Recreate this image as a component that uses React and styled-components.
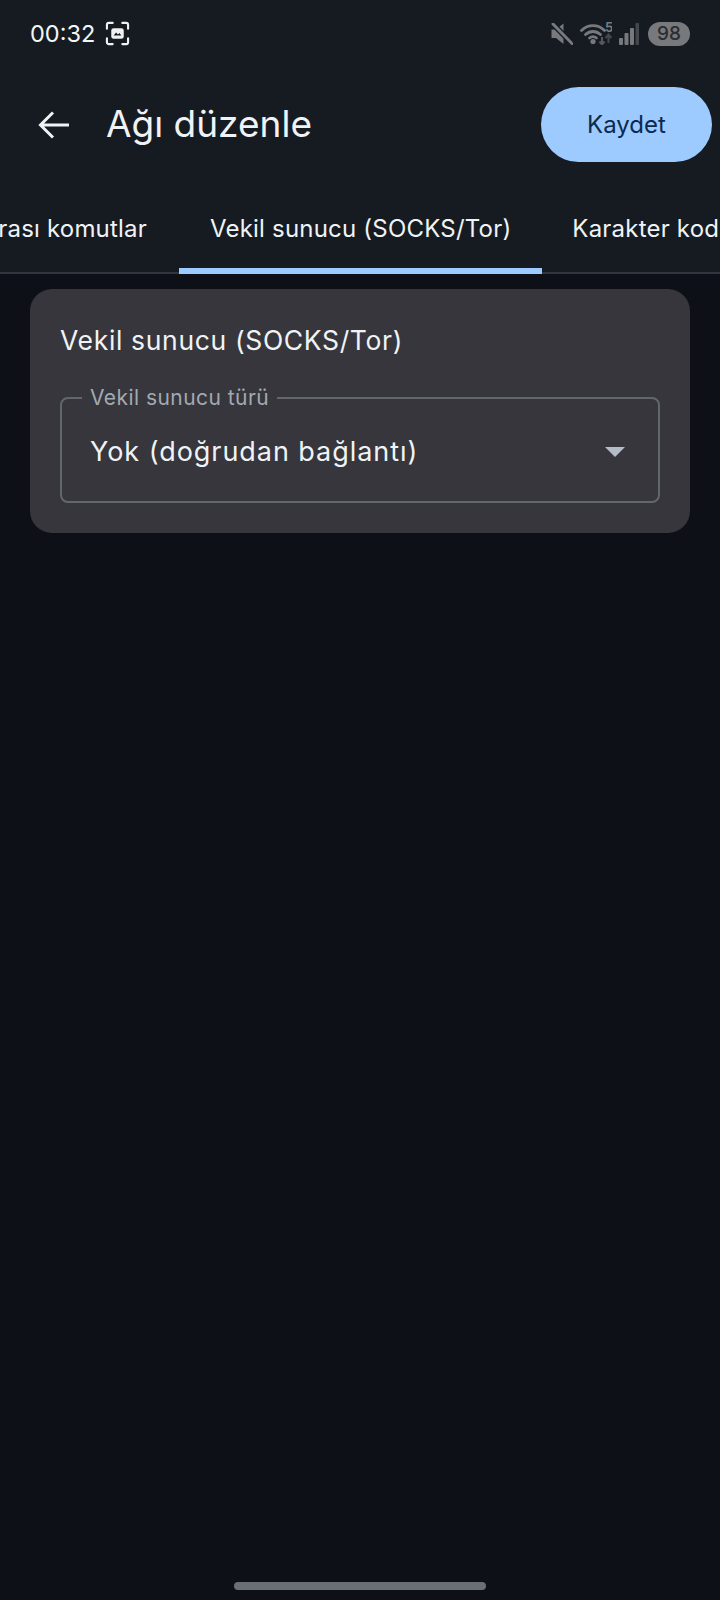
import styled, { createGlobalStyle } from "styled-components";

const GlobalStyle = createGlobalStyle`
  html, body {
    margin: 0;
    padding: 0;
    background: #0d1117;
  }
  * {
    box-sizing: border-box;
  }
`;

const Screen = styled.div`
  width: 720px;
  height: 1600px;
  display: flex;
  flex-direction: column;
  overflow: hidden;
  background: #0d1117;
  font-family: Inter, "Liberation Sans", sans-serif;
  color: #f0f3f6;
`;

const Top = styled.header`
  background: #161b22;
`;

const StatusBar = styled.div`
  height: 64px;
  padding: 3px 30px 0;
  display: flex;
  align-items: center;
  justify-content: space-between;
`;

const StatusLeft = styled.div`
  display: flex;
  align-items: center;
  gap: 10px;
`;

const Clock = styled.span`
  font-size: 23.5px;
  color: #f4f5f6;
`;

const StatusRight = styled.div`
  display: flex;
  align-items: center;
  gap: 7px;
`;

const Battery = styled.span`
  width: 42px;
  height: 24px;
  margin-left: 2px;
  border-radius: 12px;
  background: #77797c;
  color: #2a2d32;
  font-size: 19px;
  font-weight: 500;
  display: flex;
  align-items: center;
  justify-content: center;
`;

const AppBar = styled.div`
  height: 124px;
  padding: 0 8px 3px 38px;
  display: flex;
  align-items: center;
`;

const BackIcon = styled.svg`
  width: 32px;
  height: 30px;
  margin-right: 36px;
`;

const Title = styled.h1`
  flex: 1;
  margin: 0 0 2px;
  font-size: 37px;
  font-weight: 400;
`;

const SaveButton = styled.button`
  width: 171px;
  height: 75px;
  border: 0;
  border-radius: 38px;
  background: #9ecbff;
  color: #0a2a52;
  font-family: inherit;
  font-size: 24px;
`;

const TabStrip = styled.nav`
  height: 86px;
  display: flex;
  border-bottom: 2px solid #30363d;
`;

const Tab = styled.div`
  flex: none;
  height: 86px;
  padding: 0 ${(p) => p.$pad}px;
  display: flex;
  align-items: center;
  white-space: nowrap;
  font-size: 24px;
  letter-spacing: 0.2px;
  color: #f0f3f6;
  border-bottom: 6px solid ${(p) => (p.$active ? "#9ecbff" : "transparent")};
`;

const ClippedTab = styled(Tab)`
  width: 179px;
  justify-content: flex-end;
  overflow: hidden;
`;

const Body = styled.main`
  flex: 1;
  padding: 15px 30px 0;
  display: flex;
  flex-direction: column;
`;

const Card = styled.section`
  height: 244px;
  padding: 30px;
  border-radius: 22px;
  background: #36363c;
`;

const CardTitle = styled.h2`
  margin: 0;
  height: 68px;
  font-size: 26.5px;
  line-height: 42px;
  font-weight: 400;
  letter-spacing: 0.65px;
`;

const Field = styled.fieldset`
  margin: 0;
  height: 116px;
  padding: 0 33px 0 20px;
  display: flex;
  align-items: center;
  justify-content: space-between;
  border: 2px solid #62666f;
  border-radius: 8px;
  min-width: 0;
`;

const FieldLabel = styled.legend`
  padding: 0 8px;
  font-size: 21px;
  line-height: 22px;
  color: #a3a9b2;
  letter-spacing: 0.45px;
`;

const FieldValue = styled.span`
  margin: 0 0 8px 8px;
  font-size: 27px;
  letter-spacing: 0.95px;
`;

const Caret = styled.span`
  width: 0;
  height: 0;
  margin-bottom: 7px;
  border-left: 10px solid transparent;
  border-right: 10px solid transparent;
  border-top: 10px solid #b4bcc8;
`;

const HomeArea = styled.div`
  height: 28px;
  padding-top: 10px;
  display: flex;
  justify-content: center;
`;

const HomeBar = styled.div`
  width: 252px;
  height: 8px;
  border-radius: 4px;
  background: #6a6f76;
`;

function ScreenshotIcon() {
  return (
    <svg width="25" height="25" viewBox="0 0 26 26" fill="none">
      <path
        d="M2 8V4a2 2 0 0 1 2-2h4M18 2h4a2 2 0 0 1 2 2v4M24 18v4a2 2 0 0 1-2 2h-4M8 24H4a2 2 0 0 1-2-2v-4"
        stroke="#f0f1f2"
        strokeWidth="2.2"
        strokeLinecap="round"
      />
      <rect x="6.5" y="7.5" width="13" height="11" rx="2.5" fill="#f0f1f2" />
      <path d="M9 15l2.500-3 2 2 1.500-1.500 2 2.500z" fill="#161b22" />
    </svg>
  );
}

function MuteIcon() {
  return (
    <svg width="22" height="22" viewBox="0 0 22 22" fill="#77797c">
      <path d="M0.500 6.500h4.500L12.500 0.500v20.500l-7.500-6H0.500z" />
      <path d="M2 1l19 19.500" stroke="#161b22" strokeWidth="5.500" />
      <path d="M2 1l19 19.500" stroke="#77797c" strokeWidth="3" strokeLinecap="round" />
    </svg>
  );
}

function WifiIcon() {
  return (
    <svg width="32" height="23" viewBox="0 0 32 23" fill="none">
      <g stroke="#77797c" strokeWidth="2.800" strokeLinecap="round">
        <path d="M1.500 8.500C8 2 18 2 24.500 8.500" />
        <path d="M5.500 12.500c4.500-4 10.500-4 15 0" />
        <path d="M9.500 16c2.500-2 4.500-2 7 0" />
      </g>
      <circle cx="13" cy="19.500" r="2.600" fill="#77797c" />
      <text x="25" y="9.500" fontSize="13" fontWeight="700" fill="#77797c" fontFamily="Inter, sans-serif">
        5
      </text>
      <path d="M22 15v7m-2.500-2.500l2.500 3 2.500-3" stroke="#55585c" strokeWidth="2" />
      <path d="M28.500 21v-8m-3 3l3-3.500 3 3.500" stroke="#45484c" strokeWidth="2" />
    </svg>
  );
}

function SignalIcon() {
  return (
    <svg width="20" height="22" viewBox="0 0 20 22">
      <rect x="0" y="15" width="4" height="7" rx="1" fill="#77797c" />
      <rect x="5.500" y="10" width="4" height="12" rx="1" fill="#77797c" />
      <rect x="11" y="5" width="4" height="17" rx="1" fill="#77797c" />
      <rect x="16.500" y="0" width="3.500" height="22" rx="1" fill="#44474b" />
    </svg>
  );
}

export default function App() {
  return (
    <>
      <GlobalStyle />
      <Screen>
        <Top>
          <StatusBar>
            <StatusLeft>
              <Clock>00:32</Clock>
              <ScreenshotIcon />
            </StatusLeft>
            <StatusRight>
              <MuteIcon />
              <WifiIcon />
              <SignalIcon />
              <Battery>98</Battery>
            </StatusRight>
          </StatusBar>
          <AppBar>
            <BackIcon viewBox="0 0 32 30" fill="none">
              <path
                d="M31 15H3M15 2.500L2.500 15 15 27.500"
                stroke="#f0f3f6"
                strokeWidth="3"
              />
            </BackIcon>
            <Title>Ağı düzenle</Title>
            <SaveButton>Kaydet</SaveButton>
          </AppBar>
          <TabStrip>
            <ClippedTab $pad={32}>Bağlantı sonrası komutlar</ClippedTab>
            <Tab $active $pad={31}>Vekil sunucu (SOCKS/Tor)</Tab>
            <Tab $pad={30}>Karakter kodlaması</Tab>
          </TabStrip>
        </Top>
        <Body>
          <Card>
            <CardTitle>Vekil sunucu (SOCKS/Tor)</CardTitle>
            <Field>
              <FieldLabel>Vekil sunucu türü</FieldLabel>
              <FieldValue>Yok (doğrudan bağlantı)</FieldValue>
              <Caret />
            </Field>
          </Card>
        </Body>
        <HomeArea>
          <HomeBar />
        </HomeArea>
      </Screen>
    </>
  );
}
